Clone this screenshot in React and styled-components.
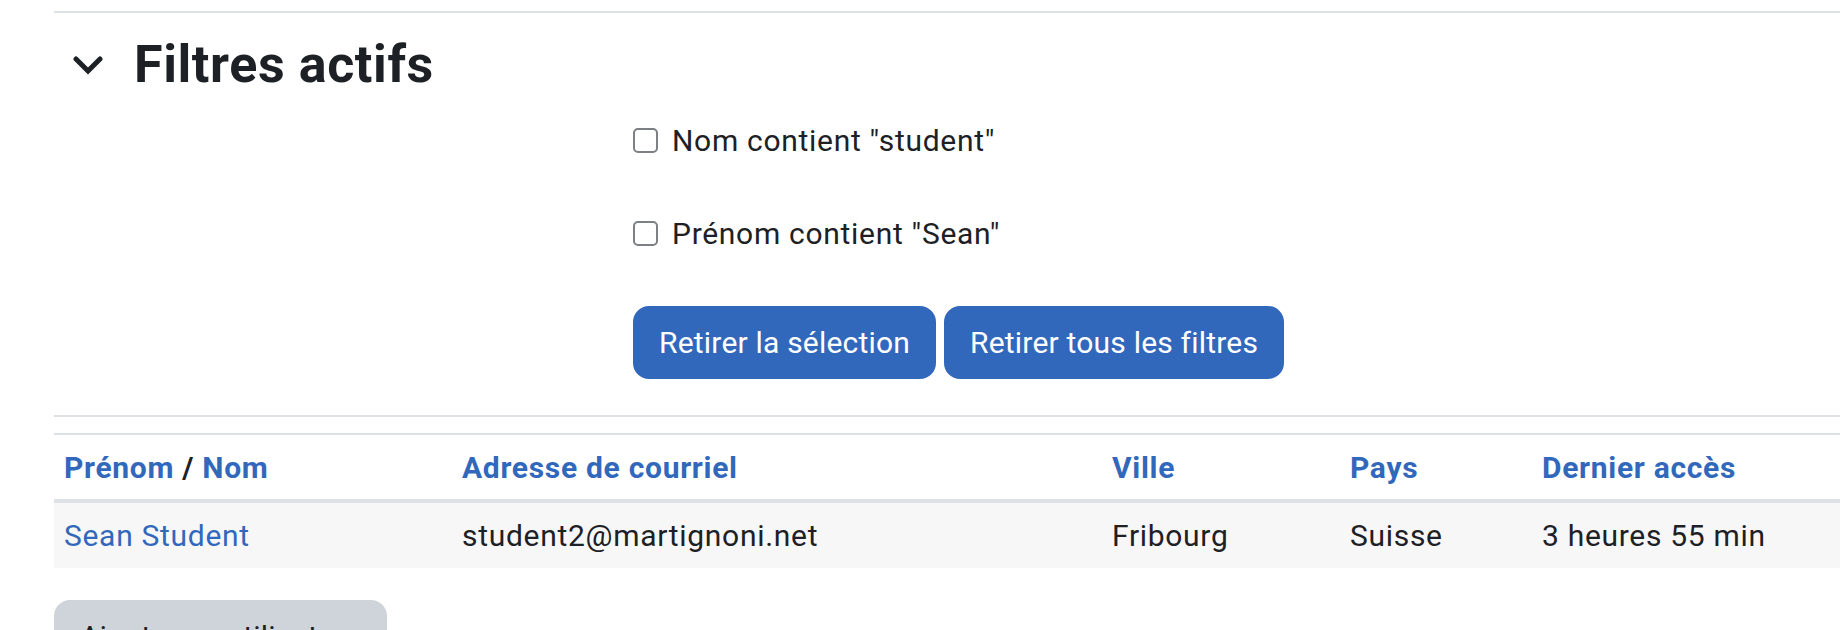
import React from "react";
import styled, { createGlobalStyle } from "styled-components";

const GlobalStyle = createGlobalStyle`
  html, body {
    margin: 0;
    padding: 0;
    background: #ffffff;
    overflow: hidden;
  }
  body {
    font-family: Roboto, "Noto Sans", "Liberation Sans", sans-serif;
    font-size: 30px;
    line-height: 1.5;
    letter-spacing: 0.7px;
    color: #1d2125;
  }
`;

const Page = styled.div`
  padding: 11px 0 0 54px;
  height: 630px;
  box-sizing: border-box;
`;

const Rule = styled.div`
  height: 2px;
  background: #dee2e6;
  margin-top: ${(p) => p.$top || 0}px;
`;

const Legend = styled.div`
  display: flex;
  align-items: center;
  margin-top: 21px;
  height: 62px;
`;

const Toggle = styled.span`
  display: flex;
  align-items: center;
  width: 80px;
  padding-left: 19px;
  box-sizing: border-box;
  color: #1d2125;
`;

const Title = styled.h3`
  margin: 0;
  font-size: 52px;
  font-weight: 700;
  line-height: 62px;
  letter-spacing: 0.6px;
  color: #1d2125;
`;

const FilterForm = styled.div`
  padding-left: 579px;
  display: flex;
  flex-direction: column;
`;

const CheckRow = styled.label`
  display: flex;
  align-items: center;
  height: 45px;
  margin-top: ${(p) => p.$top}px;
`;

const Box = styled.span`
  width: 25px;
  height: 25px;
  box-sizing: border-box;
  border: 2px solid #7c7f83;
  border-radius: 5px;
  background: #fff;
  margin-right: 14px;
`;

const Buttons = styled.div`
  display: flex;
  gap: 8px;
  margin-top: 50px;
`;

const Button = styled.button`
  font-family: inherit;
  font-size: 30px;
  line-height: 45px;
  letter-spacing: 0.2px;
  padding: 12px 24px;
  border: 2px solid ${(p) => (p.$secondary ? "#ced4da" : "#3268bc")};
  border-radius: 16px;
  background: ${(p) => (p.$secondary ? "#ced4da" : "#3268bc")};
  color: ${(p) => (p.$secondary ? "#1d2125" : "#ffffff")};
  cursor: pointer;
  white-space: nowrap;
`;

const Table = styled.div`
  margin-top: 16px;
  border-top: 2px solid #dee2e6;
`;

const Row = styled.div`
  display: grid;
  grid-template-columns: 398px 650px 238px 192px 1fr;
  background: ${(p) => (p.$striped ? "#f7f7f7" : "transparent")};
  border-bottom: ${(p) => (p.$head ? "4px solid #dee2e6" : "none")};
`;

const Cell = styled.div`
  padding: ${(p) => (p.$head ? "10px 10px 9px" : "10px 10px 10px")};
  font-weight: ${(p) => (p.$head ? 700 : 400)};
  white-space: nowrap;
`;

const Link = styled.a`
  color: #3268bc;
  text-decoration: none;
`;

const Slash = styled.span`
  color: #1d2125;
`;

const Footer = styled.div`
  margin-top: 32px;
`;

const Chevron = () => (
  <svg width="30" height="20" viewBox="0 0 30 20" fill="none">
    <polyline
      points="3,4 15,16 27,4"
      stroke="#1d2125"
      strokeWidth="5"
      strokeLinecap="round"
      strokeLinejoin="miter"
    />
  </svg>
);

const headers = ["Adresse de courriel", "Ville", "Pays", "Dernier accès"];

export default function App() {
  return (
    <>
      <GlobalStyle />
      <Page>
        <Rule />
        <Legend>
          <Toggle>
            <Chevron />
          </Toggle>
          <Title>Filtres actifs</Title>
        </Legend>

        <FilterForm>
          <CheckRow $top={22}>
            <Box />
            Nom contient "student"
          </CheckRow>
          <CheckRow $top={48}>
            <Box />
            Prénom contient "Sean"
          </CheckRow>
          <Buttons>
            <Button>Retirer la sélection</Button>
            <Button>Retirer tous les filtres</Button>
          </Buttons>
        </FilterForm>

        <Rule $top={36} />

        <Table>
          <Row $head>
            <Cell $head>
              <Link href="#">Prénom</Link> <Slash>/</Slash>{" "}
              <Link href="#">Nom</Link>
            </Cell>
            {headers.map((h) => (
              <Cell $head key={h}>
                <Link href="#">{h}</Link>
              </Cell>
            ))}
          </Row>
          <Row $striped>
            <Cell>
              <Link href="#">Sean Student</Link>
            </Cell>
            <Cell>student2@martignoni.net</Cell>
            <Cell>Fribourg</Cell>
            <Cell>Suisse</Cell>
            <Cell>3 heures 55 min</Cell>
          </Row>
        </Table>

        <Footer>
          <Button $secondary>Ajouter un utilisateur</Button>
        </Footer>
      </Page>
    </>
  );
}
